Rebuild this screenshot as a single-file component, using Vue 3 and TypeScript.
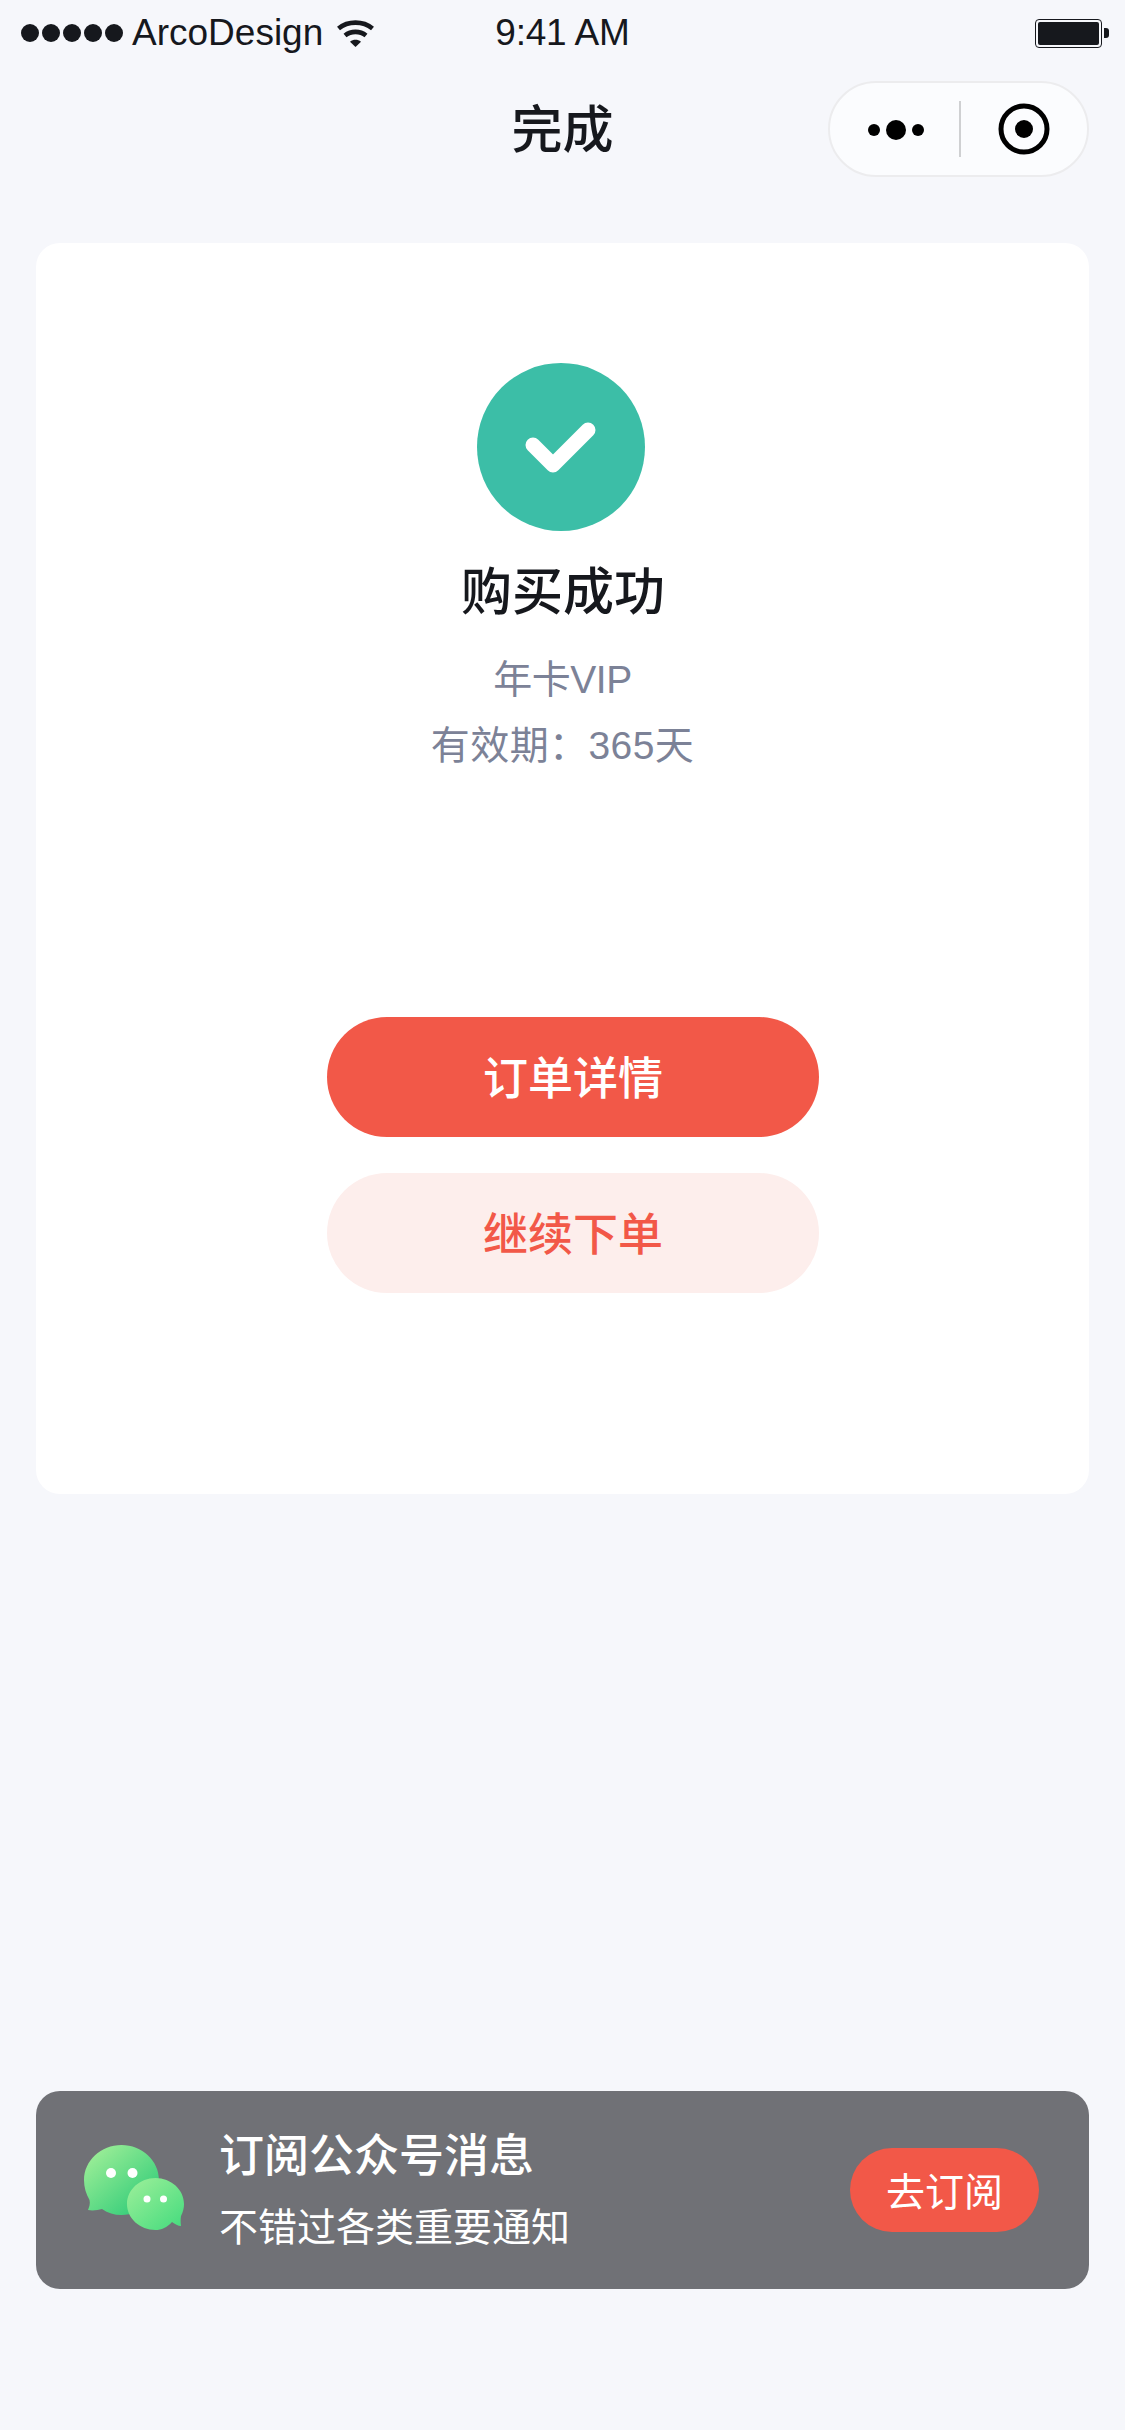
<script setup lang="ts">
const signalDots = [1, 2, 3, 4, 5]
</script>

<template>
  <div class="page">
    <div class="status-bar">
      <div class="signal">
        <span v-for="dot in signalDots" :key="dot" class="signal-dot"></span>
      </div>
      <span class="carrier">ArcoDesign</span>
      <svg class="wifi" width="39" height="27" viewBox="0 0 39 27">
        <path d="M2.5 8.5C12 .6 27 .6 36.5 8.5" fill="none" stroke="#16181d" stroke-width="4.6" />
        <path d="M9 15.5C15 10.6 24 10.6 30 15.5" fill="none" stroke="#16181d" stroke-width="4.6" />
        <path d="M14 21.8C17.4 19.2 21.6 19.2 25 21.8L19.5 27Z" fill="#16181d" />
      </svg>
      <span class="time">9:41 AM</span>
      <div class="battery">
        <div class="battery-body"><div class="battery-fill"></div></div>
        <div class="battery-nib"></div>
      </div>
    </div>

    <div class="nav">
      <span class="nav-title">完成</span>
      <div class="capsule">
        <svg class="capsule-more" width="64" height="22" viewBox="0 0 64 22">
          <circle cx="6" cy="11" r="6" />
          <circle cx="28" cy="11" r="10" />
          <circle cx="50" cy="11" r="6" />
        </svg>
        <span class="capsule-line"></span>
        <svg class="capsule-target" width="52" height="52" viewBox="0 0 52 52">
          <circle cx="26" cy="26" r="23" fill="none" stroke="#000" stroke-width="5" />
          <circle cx="26" cy="26" r="9" />
        </svg>
      </div>
    </div>

    <div class="card">
      <div class="ok-circle">
        <svg width="78" height="62" viewBox="0 0 78 62">
          <path d="M11 29L31 49L66 14" fill="none" stroke="#fff" stroke-width="15" stroke-linecap="round" stroke-linejoin="round" />
        </svg>
      </div>
      <div class="result-title">购买成功</div>
      <div class="result-desc desc-name">年卡VIP</div>
      <div class="result-desc desc-date">有效期：365天</div>
      <div class="actions">
        <button class="btn btn-primary">订单详情</button>
        <button class="btn btn-light">继续下单</button>
      </div>
    </div>

    <div class="subscribe">
      <svg class="wechat" width="100" height="87" viewBox="0 0 100 87">
        <defs>
          <linearGradient id="bigBubble" x1="0.1" y1="0.05" x2="0.9" y2="0.9">
            <stop offset="0" stop-color="#a0ef98" />
            <stop offset="1" stop-color="#2ecb78" />
          </linearGradient>
          <linearGradient id="smallBubble" x1="0.1" y1="0.05" x2="0.9" y2="0.9">
            <stop offset="0" stop-color="#98ee98" />
            <stop offset="1" stop-color="#4cdd80" />
          </linearGradient>
        </defs>
        <path d="M37.5 0C58 0 75 15.7 75 35C75 54 58 70 37.5 70C30 70 24 68 18 64C14 65 9 66 4 65C5 62 6.5 59 5.5 55C2 49 0 42 0 35C0 15.7 17 0 37.5 0Z" fill="url(#bigBubble)" />
        <path d="M71.5 33C87 33 100 44.6 100 59C100 63 99 67 97 71C96.5 74 96.5 77 97 81C94 81 91 79 88 77C83 82.5 77.5 85 71.5 85C56 85 43 73.4 43 59C43 44.6 56 33 71.5 33Z" fill="url(#smallBubble)" />
        <circle cx="27" cy="28" r="5" fill="#fff" />
        <circle cx="48.5" cy="28" r="5" fill="#fff" />
        <circle cx="63" cy="54" r="3.5" fill="#fff" />
        <circle cx="79.5" cy="54" r="3.5" fill="#fff" />
      </svg>
      <div class="subscribe-text">
        <div class="subscribe-title">订阅公众号消息</div>
        <div class="subscribe-desc">不错过各类重要通知</div>
      </div>
      <button class="subscribe-btn">去订阅</button>
    </div>
  </div>
</template>

<style>
body {
  background: #f6f7fb;
}
</style>

<style scoped>
.page {
  width: 1125px;
  height: 2430px;
  display: flex;
  flex-direction: column;
  background: #f6f7fb;
  color: #16181d;
  font-family: "Liberation Sans", "Noto Sans CJK SC", sans-serif;
  overflow: hidden;
}

.status-bar {
  height: 66px;
  display: flex;
  align-items: center;
  padding-left: 21px;
}

.signal {
  display: flex;
  gap: 3px;
}

.signal-dot {
  width: 18px;
  height: 18px;
  border-radius: 50%;
  background: #16181d;
}

.carrier {
  margin-left: 9px;
  font-size: 37px;
  line-height: 66px;
}

.wifi {
  margin-left: 13px;
}

.time {
  margin-left: 120px;
  font-size: 37px;
  line-height: 66px;
  letter-spacing: -0.2px;
}

.battery {
  margin-left: auto;
  margin-right: 16px;
  display: flex;
  align-items: center;
  gap: 2px;
}

.battery-body {
  width: 67px;
  height: 29px;
  box-sizing: border-box;
  border: 1px solid #16181d;
  border-radius: 4px;
  padding: 2px;
}

.battery-fill {
  height: 100%;
  border-radius: 2px;
  background: #16181d;
}

.battery-nib {
  width: 5px;
  height: 10px;
  border-radius: 0 3px 3px 0;
  background: #16181d;
}

.nav {
  height: 128px;
  display: flex;
  align-items: center;
  justify-content: center;
  position: relative;
}

.nav-title {
  font-size: 51px;
  font-weight: 500;
  line-height: 70px;
  margin-top: 2px;
}

.capsule {
  position: absolute;
  right: 36px;
  top: 15px;
  width: 261px;
  height: 96px;
  box-sizing: border-box;
  display: flex;
  align-items: center;
  border: 2px solid #ececee;
  border-radius: 48px;
  background: #fbfcfe;
}

.capsule-more {
  margin-left: 38px;
  margin-top: 2px;
}

.capsule-line {
  width: 2px;
  height: 56px;
  margin-left: 27px;
  background: #cfd0d2;
}

.capsule-target {
  margin-left: 37px;
}

.card {
  margin: 49px 36px 0;
  height: 1251px;
  box-sizing: border-box;
  padding-top: 120px;
  display: flex;
  flex-direction: column;
  align-items: center;
  border-radius: 24px;
  background: #fff;
}

.ok-circle {
  width: 168px;
  height: 168px;
  margin-right: 3px;
  display: flex;
  align-items: center;
  justify-content: center;
  border-radius: 50%;
  background: #3cbea7;
}

.result-title {
  margin-top: 28px;
  margin-left: 1px;
  font-size: 51px;
  font-weight: 500;
  line-height: 68px;
}

.result-desc {
  font-size: 39px;
  line-height: 66px;
  color: #7c8297;
}

.result-title + .result-desc {
  margin-top: 20px;
}

.desc-name {
  letter-spacing: -0.5px;
}

.desc-date {
  letter-spacing: 0.4px;
}

.actions {
  margin-top: 238px;
  margin-left: 21px;
  display: flex;
  flex-direction: column;
  gap: 36px;
}

.btn {
  width: 492px;
  height: 120px;
  padding: 0 0 3px;
  border: 0;
  border-radius: 60px;
  font-family: inherit;
  font-size: 45px;
  font-weight: 500;
}

.btn-primary {
  background: #f25848;
  color: #fff;
}

.btn-light {
  background: #fdeeec;
  color: #f25848;
}

.subscribe {
  margin: auto 36px 141px;
  height: 198px;
  box-sizing: border-box;
  padding: 0 50px 0 48px;
  display: flex;
  align-items: center;
  border-radius: 24px;
  background: #707176;
  color: #fff;
}

.wechat {
  flex-shrink: 0;
  margin-top: -4px;
}

.subscribe-text {
  margin-left: 35px;
  flex: 1;
}

.subscribe-title {
  margin-top: 3px;
  font-size: 45px;
  font-weight: 500;
  line-height: 64px;
}

.subscribe-desc {
  margin-top: 9px;
  font-size: 39px;
  line-height: 60px;
}

.subscribe-btn {
  width: 189px;
  height: 84px;
  padding: 0 0 3px;
  border: 0;
  border-radius: 42px;
  background: #f25848;
  color: #fff;
  font-family: inherit;
  font-size: 39px;
}
</style>
